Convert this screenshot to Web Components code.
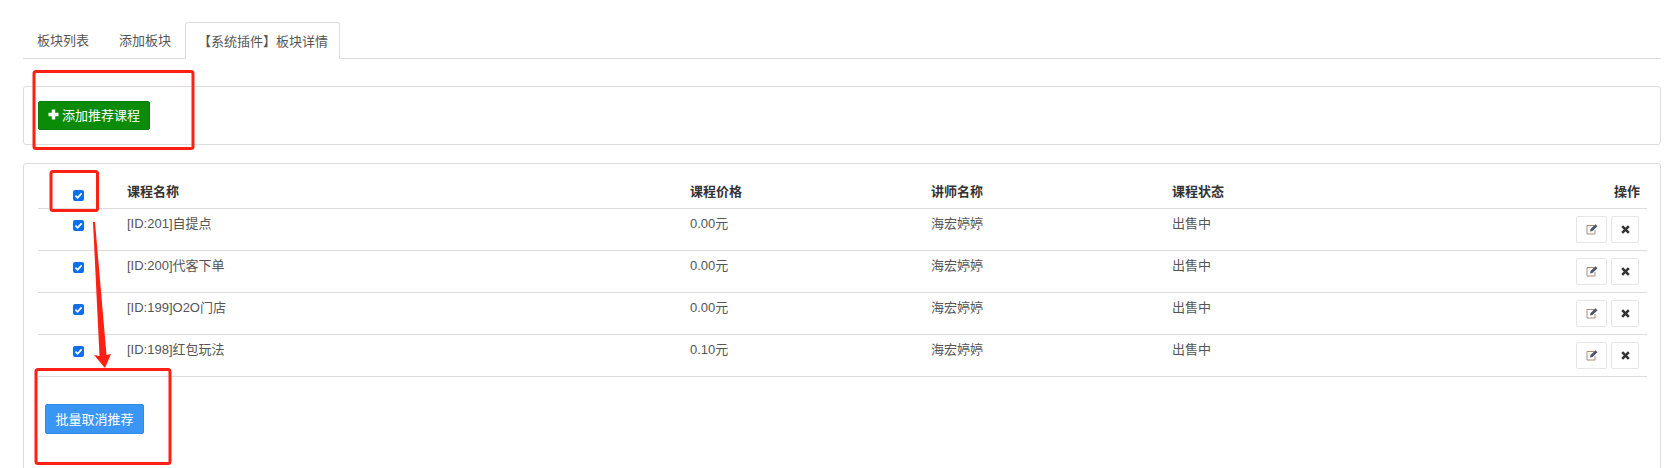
<!DOCTYPE html>
<html>
<head>
<meta charset="utf-8">
<style>
  html, body { margin: 0; background: #fff; height: 468px; overflow: hidden; }
  body { font-family: "Liberation Sans", "Noto Sans CJK SC", sans-serif; font-size: 13px; color: #555; }
</style>
</head>
<body>
<app-page></app-page>

<template id="tabs-tpl">
  <style>
    :host { display: flex; height: 38px; margin-top: 20px; border-bottom: 1px solid #ddd; align-items: flex-end; }
    .tab { height: 38px; box-sizing: border-box; padding: 11px 15px 0 14px; line-height: 18px; color: #555; margin-bottom: -1px; }
    .tab.second { padding: 11px 14px 0 15px; }
    .tab.active { height: 37px; padding: 10px 11px 0 12px; border: 1px solid #ddd; border-bottom-color: #fff; border-radius: 3px 3px 0 0; background: #fff; }
  </style>
  <div class="tab">板块列表</div>
  <div class="tab second">添加板块</div>
  <div class="tab active">【系统插件】板块详情</div>
</template>

<template id="panel-tpl">
  <style>
    :host { display: block; border: 1px solid #ddd; border-radius: 3px; background: #fff; box-sizing: border-box; }
  </style>
  <slot></slot>
</template>

<template id="btn-tpl">
  <style>
    :host { display: inline-flex; align-items: center; justify-content: center; box-sizing: border-box; border-radius: 2px; color: #fff; font-size: 13px; gap: 3px; white-space: nowrap; padding-bottom: 2px; }
    :host([kind="green"]) { background: #0a8c08; border: 1px solid #0a7f08; width: 112px; height: 29px; }
    :host([kind="blue"]) { background: #3a96f5; border: 1px solid #2f8be8; width: 99px; height: 30px; }
  </style>
  <slot name="icon"></slot><slot></slot>
</template>

<template id="check-tpl">
  <style>
    :host { display: inline-block; width: 11px; height: 11px; border-radius: 2px; background: #0b6ff0; line-height: 0; }
    svg { width: 11px; height: 11px; fill: none; stroke: #fff; stroke-width: 1.8; }
  </style>
  <svg viewBox="0 0 11 11"><path d="M2.4 5.6l2.2 2.2 4-4.4"/></svg>
</template>

<template id="row-tpl">
  <style>
    :host { display: grid; grid-template-columns: 89px 563px 241px 241px 1fr auto; height: 42px; box-sizing: border-box; border-bottom: 1px solid #ddd; color: #555; }
    :host([head]) { height: 45px; align-items: end; font-weight: bold; color: #333; }
    .c { padding-top: 6px; line-height: 18px; }
    :host([head]) .c { padding: 0 0 7px; }
    .sel { padding: 11px 0 0 35px; line-height: 0; }
    :host([head]) .sel { padding: 0 0 7px 35px; }
    .ops { display: flex; gap: 4px; padding: 7px 8px 0 0; }
    :host([head]) .ops { padding: 0 7px 7px 0; line-height: 18px; }
    .op { width: 31px; height: 27px; box-sizing: border-box; border: 1px solid #e6e6e6; border-radius: 2px; display: flex; align-items: center; justify-content: center; background: #fff; }
    .op.del { width: 28px; }
    svg { display: block; }
  </style>
  <div class="sel"><app-check></app-check></div>
  <div class="c name"></div><div class="c price"></div><div class="c teacher"></div><div class="c status"></div>
  <div class="ops"></div>
</template>

<template id="page-tpl">
  <style>
    :host { display: block; position: relative; width: 1679px; height: 468px; overflow: hidden; }
    .wrap { display: flex; flex-direction: column; margin: 0 18px 0 23px; }
    app-panel.top { height: 59px; margin-top: 27px; padding: 14px 0 0 14px; }
    app-panel.main { height: 320px; margin-top: 18px; padding: 0 13px 0 14px; }
    .foot { padding: 27px 0 0 7px; }
    svg.marks { position: absolute; left: 0; top: 0; pointer-events: none; }
  </style>
  <div class="wrap">
    <app-tabs></app-tabs>
    <app-panel class="top">
      <app-btn kind="green"><svg slot="icon" viewBox="0 0 11 11" width="11" height="11" fill="#fff"><path d="M3.8 0.5h3.4v3.3h3.3v3.4H7.2v3.3H3.8V7.2H0.5V3.8h3.3z"/></svg>添加推荐课程</app-btn>
    </app-panel>
    <app-panel class="main">
      <app-row head name="课程名称" price="课程价格" teacher="讲师名称" status="课程状态"></app-row>
      <app-row name="[ID:201]自提点" price="0.00元" teacher="海宏婷婷" status="出售中"></app-row>
      <app-row name="[ID:200]代客下单" price="0.00元" teacher="海宏婷婷" status="出售中"></app-row>
      <app-row name="[ID:199]O2O门店" price="0.00元" teacher="海宏婷婷" status="出售中"></app-row>
      <app-row name="[ID:198]红包玩法" price="0.10元" teacher="海宏婷婷" status="出售中"></app-row>
      <div class="foot"><app-btn kind="blue">批量取消推荐</app-btn></div>
    </app-panel>
  </div>
  <svg class="marks" width="1679" height="468" fill="none" stroke="#ff2015" stroke-width="3">
    <rect x="34" y="71.5" width="159" height="77" rx="2"/>
    <rect x="51" y="171.5" width="46.5" height="39" rx="2"/>
    <rect x="36" y="369.5" width="134" height="94" rx="2"/>
    <path d="M93 222L95 222L106.5 355L111 354L105 368L94 355L99.5 356Z" fill="#ff2015" stroke="none"/>
  </svg>
</template>

<script>
function tpl(host, id) {
  const root = host.attachShadow({ mode: 'open' });
  root.appendChild(document.getElementById(id).content.cloneNode(true));
  return root;
}

class AppTabs extends HTMLElement { constructor() { super(); tpl(this, 'tabs-tpl'); } }
class AppPanel extends HTMLElement { constructor() { super(); tpl(this, 'panel-tpl'); } }
class AppBtn extends HTMLElement { constructor() { super(); tpl(this, 'btn-tpl'); } }
class AppCheck extends HTMLElement { constructor() { super(); tpl(this, 'check-tpl'); } }

class AppRow extends HTMLElement {
  constructor() { super(); tpl(this, 'row-tpl'); }
  connectedCallback() {
    const root = this.shadowRoot;
    ['name', 'price', 'teacher', 'status'].forEach(k => {
      root.querySelector('.' + k).textContent = this.getAttribute(k);
    });
    const ops = root.querySelector('.ops');
    if (this.hasAttribute('head')) {
      ops.textContent = '操作';
    } else {
      ops.innerHTML = `
        <div class="op"><svg width="12" height="11" viewBox="0 0 12 11" fill="none"><path d="M8 1.5H1v8.5h8V6" stroke="#b08a78" stroke-width="1"/><path d="M4 7.5l.5-2.5L9.5.3l2 1.9L6.5 7z" fill="#4d5566"/></svg></div>
        <div class="op del"><svg width="9" height="9" viewBox="0 0 9 9"><path d="M1.2 1.2l6.6 6.6M7.8 1.2L1.2 7.8" stroke="#333" stroke-width="2.6"/></svg></div>`;
    }
  }
}

class AppPage extends HTMLElement { constructor() { super(); tpl(this, 'page-tpl'); } }

customElements.define('app-tabs', AppTabs);
customElements.define('app-panel', AppPanel);
customElements.define('app-btn', AppBtn);
customElements.define('app-check', AppCheck);
customElements.define('app-row', AppRow);
customElements.define('app-page', AppPage);
</script>
</body>
</html>
